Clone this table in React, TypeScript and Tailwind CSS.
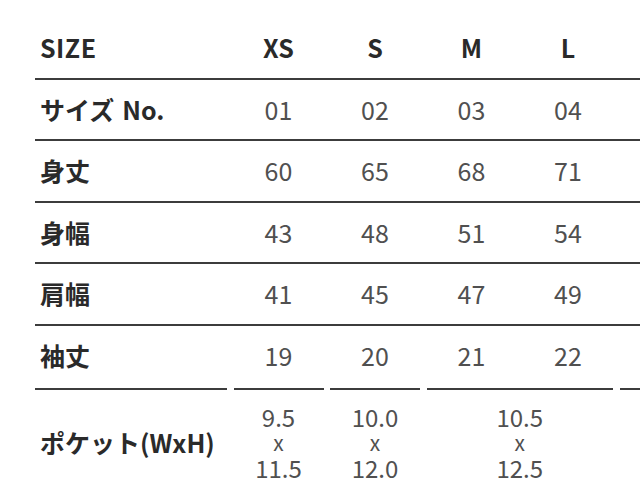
const sizes = ['XS', 'S', 'M', 'L', ''];

const rows = [
  { label: 'サイズ', suffix: 'No.', values: ['01', '02', '03', '04', ''] },
  { label: '身丈', values: ['60', '65', '68', '71', ''] },
  { label: '身幅', values: ['43', '48', '51', '54', ''] },
  { label: '肩幅', values: ['41', '45', '47', '49', ''] },
  { label: '袖丈', values: ['19', '20', '21', '22', ''] },
];

// the table runs on past the right edge, only the border of the next cell shows
const pockets = [
  { w: '9.5', h: '11.5', span: 1 },
  { w: '10.0', h: '12.0', span: 1 },
  { w: '10.5', h: '12.5', span: 2 },
  { w: '', h: '', span: 1 },
];

const font = { fontFamily: '"Noto Sans CJK JP", "Noto Sans", sans-serif' };

const SizeTable = () => {
  return (
    <div className="w-[640px] h-[496px] overflow-hidden bg-white" style={font}>
      <div className="pt-[18px] pl-[35px] w-[700px]">
        <div className="grid grid-cols-[192px_90px_90px_90px_90px_90px] gap-x-[6.5px] h-[61.6px] items-center border-b-2 border-[#3c3c3c]">
          <div className="pl-[5px] text-[25px] font-bold text-[#2a2a2a] tracking-[0.5px]">SIZE</div>
          {sizes.map((s, j) => (
            <div key={j} className="text-center text-[25px] font-bold text-[#2a2a2a]">
              {s}
            </div>
          ))}
        </div>

        {rows.map((row, i) => (
          <div
            key={row.label}
            className={
              i === rows.length - 1
                ? 'grid grid-cols-[192px_90px_90px_90px_90px_90px] gap-x-[6.5px] h-[61.6px] items-center pb-[2px]'
                : 'grid grid-cols-[192px_90px_90px_90px_90px_90px] gap-x-[6.5px] h-[61.6px] items-center border-b-2 border-[#3c3c3c]'
            }
          >
            <div className="pl-[5px] text-[25px] font-bold text-[#2a2a2a] whitespace-nowrap">
              {row.label}
              {row.suffix && <span className="ml-[8px]">{row.suffix}</span>}
            </div>
            {row.values.map((v, j) => (
              <div key={j} className="text-center text-[25px] text-[#505050]">
                {v}
              </div>
            ))}
          </div>
        ))}

        <div className="grid grid-cols-[192px_90px_90px_90px_90px_90px] gap-x-[6.5px]">
          <div className="border-t-2 border-[#3c3c3c] h-[107.6px] flex items-center pl-[5px] text-[25px] font-bold text-[#2a2a2a] whitespace-nowrap">
            ポケット(WxH)
          </div>
          {pockets.map((p, j) => (
            <div
              key={j}
              className={
                p.span === 2
                  ? 'col-span-2 border-t-2 border-[#3c3c3c] h-[107.6px] flex flex-col items-center justify-center text-[24px] leading-[25.5px] text-[#505050]'
                  : 'border-t-2 border-[#3c3c3c] h-[107.6px] flex flex-col items-center justify-center text-[24px] leading-[25.5px] text-[#505050]'
              }
            >
              {p.w && (
                <>
                  <span>{p.w}</span>
                  <span className="text-[21px]">x</span>
                  <span>{p.h}</span>
                </>
              )}
            </div>
          ))}
        </div>
      </div>
    </div>
  );
};

export default function App() {
  return <SizeTable />;
}
